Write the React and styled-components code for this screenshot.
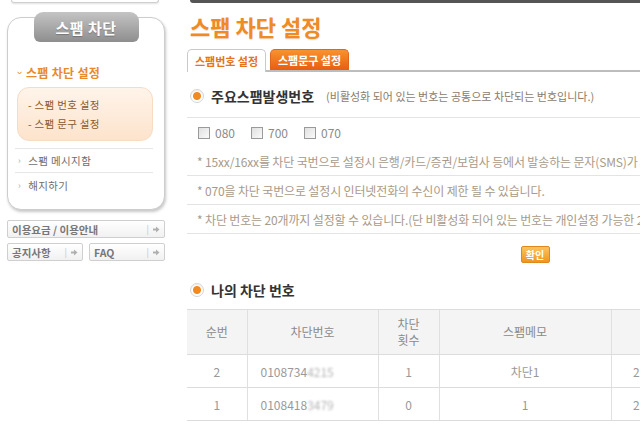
import React from "react";
import styled, { createGlobalStyle } from "styled-components";

const Global = createGlobalStyle`
  html, body { margin: 0; padding: 0; background: #fff; overflow: hidden; }
  body { font-family: "Noto Sans CJK KR", "Noto Sans", sans-serif; width: 640px; height: 439px; }
  * { box-sizing: border-box; }
`;

const Page = styled.div`
  display: flex;
  gap: 22px;
  width: 640px;
  height: 439px;
  overflow: hidden;
`;

const Sidebar = styled.aside`
  flex: 0 0 165px;
  padding-left: 7px;
  display: flex;
  flex-direction: column;
`;

const PrevBoxEdge = styled.div`
  height: 3px;
  margin: 0 6px 0 4px;
  border: 1px solid #cfcfcf;
  border-top: none;
  border-radius: 0 0 8px 8px;
  box-shadow: 0 1px 2px rgba(0, 0, 0, 0.12);
`;

const MenuBox = styled.div`
  margin-top: 14px;
  border: 1px solid #cdcdcd;
  border-radius: 14px;
  background: #fff;
  box-shadow: 1px 2px 3px rgba(0, 0, 0, 0.22);
  display: flex;
  flex-direction: column;
  padding: 0 0 11px;
`;

const MenuTab = styled.div`
  align-self: center;
  margin-top: -6px;
  width: 105px;
  height: 30px;
  border-radius: 9px 9px 6px 6px;
  background: linear-gradient(#c4c4c4, #8e8e8e);
  color: #fff;
  font-weight: 700;
  font-size: 15px;
  display: flex;
  align-items: center;
  justify-content: center;
  letter-spacing: 0.5px;
  text-shadow: 0 1px 1px rgba(0, 0, 0, 0.25);
`;

const MenuTitle = styled.div`
  margin: 23px 0 0 9px;
  line-height: 16px;
  font-size: 12px;
  font-weight: 700;
  color: #e8892b;
  display: flex;
  align-items: center;
  gap: 4px;
  letter-spacing: 0.3px;
`;

const CaretIcon = () => (
  <svg width="5" height="4" viewBox="0 0 5 4" style={{ flex: "none" }}>
    <path d="M0.5 0.8L2.5 3 4.5 0.8" fill="none" stroke="#e8892b" strokeWidth="1" />
  </svg>
);

const SubBox = styled.div`
  margin: 6px 11px 0 9px;
  padding: 7px 0 7px 10px;
  border-radius: 12px;
  background: linear-gradient(#fff4ea, #fde3cc);
  border: 1px solid #f7dcc4;
`;

const SubItem = styled.div`
  line-height: 19px;
  font-size: 10.5px;
  color: #8a5a2c;
  letter-spacing: 0.3px;
`;

const MenuItem = styled.div`
  margin: 0 11px 0 7px;
  height: 25px;
  display: flex;
  align-items: center;
  gap: 7px;
  padding-left: 3px;
  font-size: 10.5px;
  color: #6e6e6e;
  letter-spacing: 0.4px;
  border-top: ${(p) => (p.$top ? "1px solid #e6e6e6" : "none")};
  border-bottom: ${(p) => (p.$bottom ? "1px solid #e6e6e6" : "none")};
`;

const Chev = styled.span`
  color: #aaa;
  font-size: 9px;
`;

const LinkGrid = styled.div`
  margin-top: 10px;
  display: grid;
  grid-template-columns: 1fr 1fr;
  gap: 5px 6px;
`;

const LinkButton = styled.div`
  grid-column: ${(p) => (p.$wide ? "1 / 3" : "auto")};
  height: 18px;
  border: 1px solid #cfcfcf;
  border-radius: 2px;
  background: linear-gradient(#fff, #f1f1f1);
  display: flex;
  align-items: center;
  justify-content: space-between;
  padding: 0 4px 0 4px;
  font-size: 10.5px;
  font-weight: 700;
  color: #777;
`;

const LinkArrow = styled.span`
  display: flex;
  align-items: center;
  gap: 4px;
  color: #c4c4c4;
  font-size: 9px;
  font-weight: 400;
`;

const ArrowIcon = () => (
  <svg width="7" height="7" viewBox="0 0 7 7">
    <path d="M0 2.5h3V0.5L6.5 3.5 3 6.5V4.5H0z" fill="#b0b0b0" />
  </svg>
);

const Main = styled.main`
  flex: 0 0 696px;
  width: 696px;
  display: flex;
  flex-direction: column;
`;

const TopBar = styled.div`
  height: 3px;
  margin-left: 3px;
  background: #555;
  border-radius: 0 0 0 3px;
`;

const Title = styled.h1`
  margin: 10px 0 0 3px;
  font-size: 22px;
  line-height: 26px;
  font-weight: 700;
  color: #ef8a25;
  letter-spacing: 0;
  text-shadow: 0 1px 1px rgba(160, 80, 0, 0.2);
`;

const TabRow = styled.div`
  margin-top: 10px;
  display: flex;
  gap: 4px;
  border-bottom: 2px solid #bdbdbd;
  height: 23px;
  align-items: flex-end;
`;

const Tab = styled.div`
  width: 79px;
  border-radius: 5px 5px 0 0;
  display: flex;
  align-items: center;
  justify-content: center;
  font-size: 11px;
  font-weight: 700;
  border: 1px solid ${(p) => (p.$active ? "#c9c9c9" : "#e0661c")};
  border-bottom: none;
  background: ${(p) =>
    p.$active ? "#fff" : "linear-gradient(#f8932e, #e85d12)"};
  color: ${(p) => (p.$active ? "#e5731a" : "#fff")};
  margin-bottom: ${(p) => (p.$active ? "-2px" : "0")};
  height: ${(p) => (p.$active ? "23px" : "21px")};
`;

const SectionHead = styled.div`
  display: flex;
  align-items: center;
  gap: 7px;
  padding: ${(p) => (p.$line ? "13px 0 10px 3px" : "0 0 0 3px")};
  margin-top: ${(p) => p.$mt || 0}px;
  border-bottom: ${(p) => (p.$line ? "1px solid #e4e4e4" : "none")};
  line-height: 22px;
`;

const Radio = styled.span`
  width: 14px;
  height: 14px;
  border-radius: 50%;
  border: 1px solid #d5d5d5;
  background: radial-gradient(circle, #f08a22 0 3.5px, #fff 4.5px);
  box-shadow: inset 0 1px 1px rgba(0, 0, 0, 0.08);
  flex: none;
`;

const HeadText = styled.span`
  font-size: 14px;
  font-weight: 700;
  color: #333;
`;

const HeadNote = styled.span`
  margin-left: 5px;
  font-size: 11px;
  color: #8c7b6b;
  letter-spacing: 0;
`;

const CheckRow = styled.div`
  height: 29px;
  display: flex;
  align-items: center;
  gap: 16px;
  padding-left: 11px;
`;

const CheckLabel = styled.label`
  display: flex;
  align-items: center;
  gap: 5px;
  font-size: 12px;
  color: #8a8a8a;
`;

const Box = styled.span`
  width: 12px;
  height: 12px;
  border: 1px solid #9a9a9a;
  background: linear-gradient(135deg, #e0e0e0, #fafafa);
`;

const NoteRow = styled.div`
  height: 29px;
  display: flex;
  align-items: center;
  padding-left: 10px;
  border-bottom: 1px solid #e3e3e3;
  font-size: 12px;
  color: #a89a8a;
  white-space: nowrap;
  letter-spacing: -0.15px;
`;

const ButtonRow = styled.div`
  display: flex;
  justify-content: center;
  margin-top: 12px;
`;

const ConfirmButton = styled.button`
  width: 29px;
  height: 17px;
  padding: 0;
  border: 1px solid #e0881c;
  border-radius: 2px;
  background: linear-gradient(#fbc35c, #f0951f);
  color: #fff;
  font-family: inherit;
  font-size: 10px;
  font-weight: 700;
  line-height: 15px;
`;

const Table = styled.table`
  margin-top: 8px;
  border-collapse: collapse;
  table-layout: fixed;
  width: 696px;
  font-size: 12px;
  color: #999;
`;

const Th = styled.th`
  height: 45px;
  background: #f4f4f4;
  font-weight: 400;
  color: #8a8a8a;
  line-height: 16px;
  border-top: 1px solid #dcdcdc;
  border-bottom: 1px solid #dcdcdc;
  border-left: ${(p) => (p.$first ? "none" : "1px solid #e0e0e0")};
  padding: 0;
`;

const Td = styled.td`
  height: 33px;
  text-align: ${(p) => (p.$left ? "left" : "center")};
  padding: ${(p) => (p.$left ? "0 0 0 13px" : "0")};
  border-bottom: 1px solid #dcdcdc;
  border-left: ${(p) => (p.$first ? "none" : "1px solid #e0e0e0")};
  white-space: nowrap;
`;

const Blur = styled.span`
  filter: blur(1.3px);
  color: #b5b5b5;
`;

export default function App() {
  return (
    <>
      <Global />
      <Page>
        <Sidebar>
          <PrevBoxEdge />
          <MenuBox>
            <MenuTab>스팸 차단</MenuTab>
            <MenuTitle>
              <CaretIcon />스팸 차단 설정
            </MenuTitle>
            <SubBox>
              <SubItem>- 스팸 번호 설정</SubItem>
              <SubItem>- 스팸 문구 설정</SubItem>
            </SubBox>
            <MenuItem style={{ marginTop: 7 }} $top $bottom>
              <Chev>›</Chev>스팸 메시지함
            </MenuItem>
            <MenuItem>
              <Chev>›</Chev>해지하기
            </MenuItem>
          </MenuBox>
          <LinkGrid>
            <LinkButton $wide>
              이용요금 / 이용안내
              <LinkArrow>|<ArrowIcon /></LinkArrow>
            </LinkButton>
            <LinkButton>
              공지사항
              <LinkArrow>|<ArrowIcon /></LinkArrow>
            </LinkButton>
            <LinkButton>
              FAQ
              <LinkArrow>|<ArrowIcon /></LinkArrow>
            </LinkButton>
          </LinkGrid>
        </Sidebar>

        <Main>
          <TopBar />
          <Title>스팸 차단 설정</Title>
          <TabRow>
            <Tab $active>스팸번호 설정</Tab>
            <Tab>스팸문구 설정</Tab>
          </TabRow>

          <SectionHead $line>
            <Radio />
            <HeadText>주요스팸발생번호</HeadText>
            <HeadNote>(비활성화 되어 있는 번호는 공통으로 차단되는 번호입니다.)</HeadNote>
          </SectionHead>
          <CheckRow>
            <CheckLabel><Box />080</CheckLabel>
            <CheckLabel><Box />700</CheckLabel>
            <CheckLabel><Box />070</CheckLabel>
          </CheckRow>
          <NoteRow>* 15xx/16xx를 차단 국번으로 설정시 은행/카드/증권/보험사 등에서 발송하는 문자(SMS)가 수신되지 않을 수 있습니다.</NoteRow>
          <NoteRow>* 070을 차단 국번으로 설정시 인터넷전화의 수신이 제한 될 수 있습니다.</NoteRow>
          <NoteRow>* 차단 번호는 20개까지 설정할 수 있습니다.(단 비활성화 되어 있는 번호는 개인설정 가능한 20개에 포함되지 않습니다.)</NoteRow>
          <ButtonRow>
            <ConfirmButton>확인</ConfirmButton>
          </ButtonRow>

          <SectionHead $mt={16}>
            <Radio />
            <HeadText>나의 차단 번호</HeadText>
          </SectionHead>
          <Table>
            <colgroup>
              <col style={{ width: 60 }} />
              <col style={{ width: 131 }} />
              <col style={{ width: 61 }} />
              <col style={{ width: 172 }} />
              <col style={{ width: 104 }} />
              <col />
            </colgroup>
            <thead>
              <tr>
                <Th $first>순번</Th>
                <Th>차단번호</Th>
                <Th>차단<br />횟수</Th>
                <Th>스팸메모</Th>
                <Th>등록일</Th>
                <Th>삭제</Th>
              </tr>
            </thead>
            <tbody>
              <tr>
                <Td $first>2</Td>
                <Td $left>0108734<Blur>4215</Blur></Td>
                <Td>1</Td>
                <Td>차단1</Td>
                <Td>2016.05.12</Td>
                <Td>삭제</Td>
              </tr>
              <tr>
                <Td $first>1</Td>
                <Td $left>0108418<Blur>3479</Blur></Td>
                <Td>0</Td>
                <Td>1</Td>
                <Td>2016.05.10</Td>
                <Td>삭제</Td>
              </tr>
            </tbody>
          </Table>
        </Main>
      </Page>
    </>
  );
}
